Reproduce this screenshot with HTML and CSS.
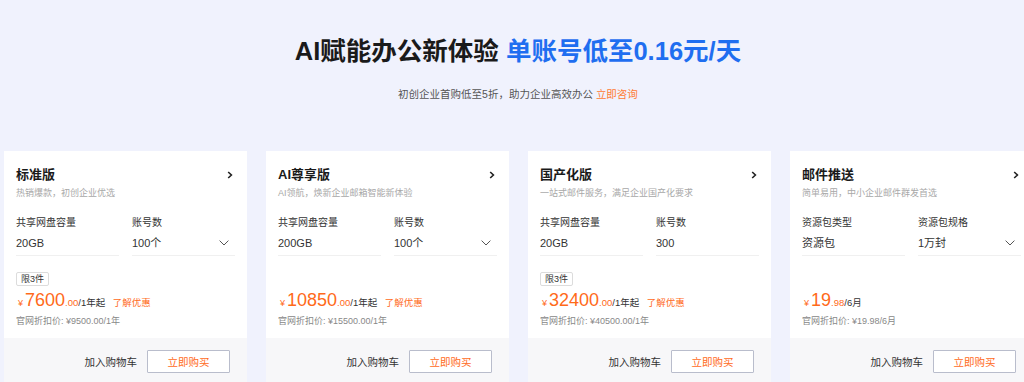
FILE: index.html
```html
<!DOCTYPE html>
<html lang="zh-CN">
<head>
    <meta charset="UTF-8">
    <meta name="viewport" content="width=device-width, initial-scale=1.0">
    <title>企业邮箱套餐</title>
    <link rel="stylesheet" href="styles.css">
</head>
<body>
    <section class="hero">
        <h1>AI赋能办公新体验 <span class="hl">单账号低至0.16元/天</span></h1>
        <p>初创企业首购低至5折，助力企业高效办公 <a href="#" class="consult">立即咨询</a></p>
    </section>

    <div class="cards">
        <div class="card">
            <div class="card-body">
                <div class="card-head">
                    <h3>标准版</h3>
                    <svg class="arrow" width="6" height="8" viewBox="0 0 6 8"><path d="M1.2 1 L4.4 4 L1.2 7" fill="none" stroke="#222" stroke-width="1.6"/></svg>
                </div>
                <p class="desc">热销爆款，初创企业优选</p>
                <div class="fields">
                    <div class="field">
                        <div class="label">共享网盘容量</div>
                        <div class="value">20GB</div>
                    </div>
                    <div class="field">
                        <div class="label">账号数</div>
                        <div class="value select">100个
                            <svg width="10" height="6" viewBox="0 0 10 6"><path d="M0.6 0.6 L5 5 L9.4 0.6" fill="none" stroke="#555" stroke-width="1"/></svg>
                        </div>
                    </div>
                </div>
                <div class="tag-slot"><span class="tag">限3件</span></div>
                <div class="price">
                    <span class="yen">¥</span><span class="num">7600</span><span class="dec">.00</span><span class="unit">/1年起</span>
                    <a href="#" class="promo">了解优惠</a>
                </div>
                <p class="orig">官网折扣价: ¥9500.00/1年</p>
            </div>
            <div class="card-foot">
                <a href="#" class="cart">加入购物车</a>
                <button class="buy">立即购买</button>
            </div>
        </div>

        <div class="card">
            <div class="card-body">
                <div class="card-head">
                    <h3>AI尊享版</h3>
                    <svg class="arrow" width="6" height="8" viewBox="0 0 6 8"><path d="M1.2 1 L4.4 4 L1.2 7" fill="none" stroke="#222" stroke-width="1.6"/></svg>
                </div>
                <p class="desc">AI领航，焕新企业邮箱智能新体验</p>
                <div class="fields">
                    <div class="field">
                        <div class="label">共享网盘容量</div>
                        <div class="value">200GB</div>
                    </div>
                    <div class="field">
                        <div class="label">账号数</div>
                        <div class="value select">100个
                            <svg width="10" height="6" viewBox="0 0 10 6"><path d="M0.6 0.6 L5 5 L9.4 0.6" fill="none" stroke="#555" stroke-width="1"/></svg>
                        </div>
                    </div>
                </div>
                <div class="tag-slot"></div>
                <div class="price">
                    <span class="yen">¥</span><span class="num">10850</span><span class="dec">.00</span><span class="unit">/1年起</span>
                    <a href="#" class="promo">了解优惠</a>
                </div>
                <p class="orig">官网折扣价: ¥15500.00/1年</p>
            </div>
            <div class="card-foot">
                <a href="#" class="cart">加入购物车</a>
                <button class="buy">立即购买</button>
            </div>
        </div>

        <div class="card">
            <div class="card-body">
                <div class="card-head">
                    <h3>国产化版</h3>
                    <svg class="arrow" width="6" height="8" viewBox="0 0 6 8"><path d="M1.2 1 L4.4 4 L1.2 7" fill="none" stroke="#222" stroke-width="1.6"/></svg>
                </div>
                <p class="desc">一站式邮件服务，满足企业国产化要求</p>
                <div class="fields">
                    <div class="field">
                        <div class="label">共享网盘容量</div>
                        <div class="value">20GB</div>
                    </div>
                    <div class="field">
                        <div class="label">账号数</div>
                        <div class="value">300</div>
                    </div>
                </div>
                <div class="tag-slot"><span class="tag">限3件</span></div>
                <div class="price">
                    <span class="yen">¥</span><span class="num">32400</span><span class="dec">.00</span><span class="unit">/1年起</span>
                    <a href="#" class="promo">了解优惠</a>
                </div>
                <p class="orig">官网折扣价: ¥40500.00/1年</p>
            </div>
            <div class="card-foot">
                <a href="#" class="cart">加入购物车</a>
                <button class="buy">立即购买</button>
            </div>
        </div>

        <div class="card">
            <div class="card-body">
                <div class="card-head">
                    <h3>邮件推送</h3>
                    <svg class="arrow" width="6" height="8" viewBox="0 0 6 8"><path d="M1.2 1 L4.4 4 L1.2 7" fill="none" stroke="#222" stroke-width="1.6"/></svg>
                </div>
                <p class="desc">简单易用，中小企业邮件群发首选</p>
                <div class="fields">
                    <div class="field">
                        <div class="label">资源包类型</div>
                        <div class="value">资源包</div>
                    </div>
                    <div class="field">
                        <div class="label">资源包规格</div>
                        <div class="value select">1万封
                            <svg width="10" height="6" viewBox="0 0 10 6"><path d="M0.6 0.6 L5 5 L9.4 0.6" fill="none" stroke="#555" stroke-width="1"/></svg>
                        </div>
                    </div>
                </div>
                <div class="tag-slot"></div>
                <div class="price">
                    <span class="yen">¥</span><span class="num">19</span><span class="dec">.98</span><span class="unit">/6月</span>
                </div>
                <p class="orig">官网折扣价: ¥19.98/6月</p>
            </div>
            <div class="card-foot">
                <a href="#" class="cart">加入购物车</a>
                <button class="buy">立即购买</button>
            </div>
        </div>
    </div>
</body>
</html>
```

FILE: styles.css
```css
body {
    margin: 0;
    background-color: #f0f2fd;
    font-family: "Liberation Sans", "Noto Sans CJK SC", sans-serif;
    color: #222;
    overflow: hidden;
}
a {
    text-decoration: none;
}

/* En-tête */
.hero {
    text-align: center;
    padding-top: 34px;
    padding-left: 12px;
}
.hero h1 {
    margin: 0;
    font-size: 25.5px;
    line-height: 34px;
    font-weight: bold;
    color: #1a1a1a;
}
.hero .hl {
    color: #1f6ef0;
}
.hero p {
    margin: 19px 0 0;
    font-size: 10.5px;
    line-height: 14px;
    color: #555;
}
.consult {
    color: #ff7a33;
}

/* Cartes */
.cards {
    display: flex;
    gap: 19px;
    padding-left: 4px;
    margin-top: 50px;
}
.card {
    flex: none;
    width: 243px;
    background: #fff;
    display: flex;
    flex-direction: column;
}
.card-body {
    height: 187px;
    box-sizing: border-box;
    padding: 15px 12px 0;
}
.card-head {
    display: flex;
    justify-content: space-between;
    align-items: center;
    height: 18px;
    padding-right: 2px;
}
.card-head h3 {
    margin: 0;
    font-size: 13px;
    line-height: 18px;
    font-weight: bold;
    color: #1a1a1a;
}
.desc {
    margin: 3px 0 0;
    font-size: 9px;
    line-height: 12px;
    color: #a8a8a8;
}
.fields {
    display: grid;
    grid-template-columns: 1fr 1fr;
    gap: 13px;
    margin-top: 17px;
}
.field {
    border-bottom: 1px solid #f0f0f0;
    padding-bottom: 5px;
}
.label {
    font-size: 10px;
    line-height: 14px;
    color: #333;
}
.value {
    margin-top: 6px;
    font-size: 11px;
    line-height: 14px;
    color: #333;
}
.value.select {
    display: flex;
    justify-content: space-between;
    align-items: center;
    padding-right: 6px;
}
.tag-slot {
    height: 14px;
    margin-top: 12px;
}
.tag {
    display: inline-block;
    height: 14px;
    box-sizing: border-box;
    padding: 0 4px;
    border: 1px solid #dcdcdc;
    border-radius: 2px;
    font-size: 9px;
    line-height: 12px;
    color: #333;
}
.price {
    margin-top: 8px;
    height: 20px;
    line-height: 20px;
    color: #ff6a1a;
    white-space: nowrap;
}
.yen {
    font-size: 9px;
    margin: 0 2px;
}
.num {
    font-size: 18px;
}
.dec {
    font-size: 9.5px;
}
.unit {
    font-size: 9.5px;
    color: #333;
}
.promo {
    margin-left: 3px;
    font-size: 9.5px;
    color: #ff6a1a;
}
.orig {
    margin: 5px 0 0;
    font-size: 9px;
    line-height: 12px;
    color: #888;
}
.card-foot {
    height: 47px;
    background: #f7f7f9;
    display: flex;
    justify-content: flex-end;
    align-items: center;
    gap: 10px;
    padding-right: 17px;
}
.cart {
    font-size: 10.5px;
    color: #333;
}
.buy {
    width: 83px;
    height: 23px;
    background: #fff;
    border: 1px solid #b9bdcc;
    border-radius: 1px;
    font-family: inherit;
    font-size: 10.5px;
    color: #ff6a1a;
    cursor: pointer;
}
```
